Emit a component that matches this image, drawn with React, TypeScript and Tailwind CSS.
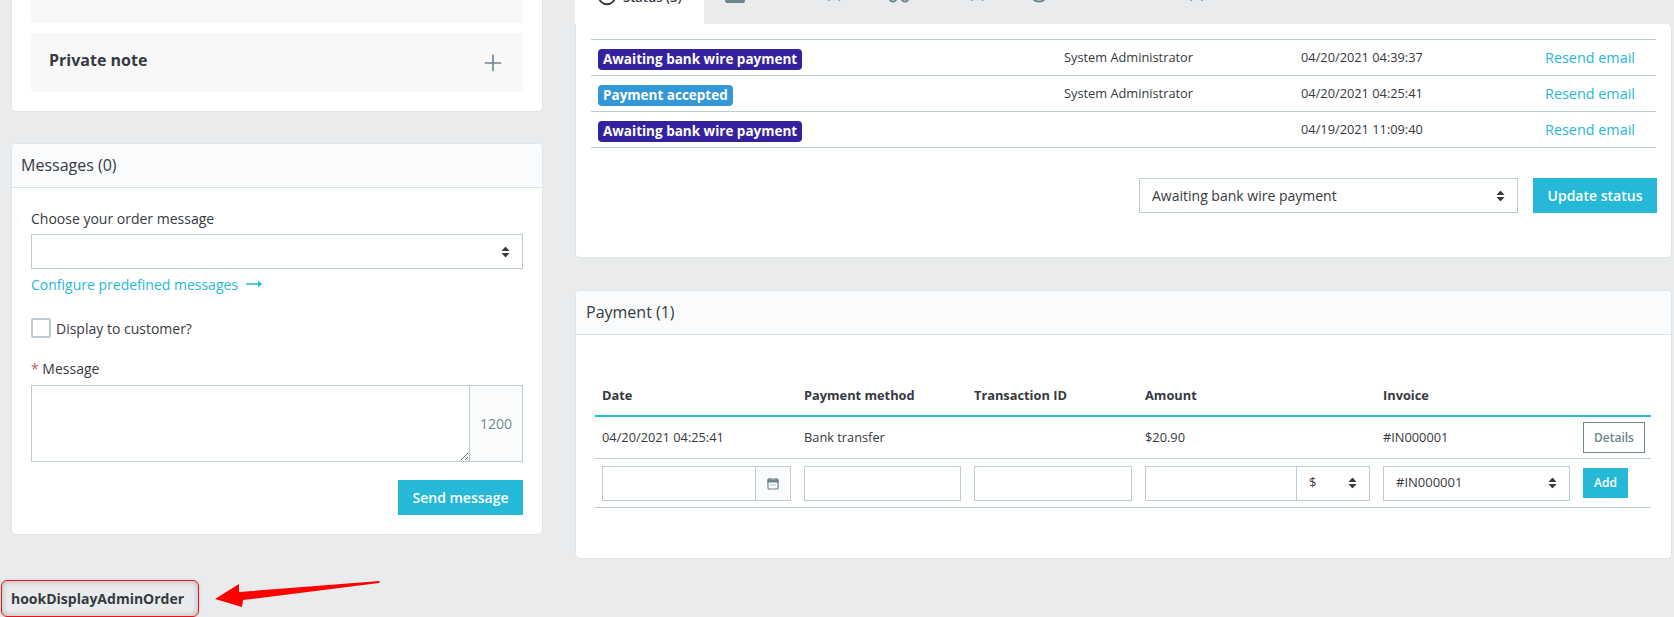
import { History, Plus } from "lucide-react";

const font = { fontFamily: '"Open Sans", sans-serif' };

// the small up/down triangles PrestaShop puts on its selects
function SortArrows({ className }: { className?: string }) {
  return (
    <svg width="9" height="11" viewBox="0 0 9 11" className={className} fill="#363a41">
      <polygon points="4.5,0 8.5,4.4 0.5,4.4" />
      <polygon points="4.5,11 8.5,6.6 0.5,6.6" />
    </svg>
  );
}

function Select({ value, className, small }: { value: string; className?: string; small?: boolean }) {
  return (
    <div className={`relative ${className ?? ""}`}>
      <select
        defaultValue={value}
        className={`w-full h-full appearance-none bg-white pl-[12px] pr-8 text-[#363a41] outline-none ${small ? "text-[13px]" : "text-[14px]"}`}
      >
        <option>{value}</option>
      </select>
      <SortArrows className="absolute right-[12px] top-1/2 -translate-y-1/2 pointer-events-none" />
    </div>
  );
}

function Card({ title, titleClass, children }: { title: string; titleClass: string; children: React.ReactNode }) {
  return (
    <div className="bg-white rounded-[5px] border border-[#dfe5e7] overflow-hidden">
      <div className={`h-[44px] flex items-center pb-[2px] bg-[#fafbfc] border-b border-[#dbe6e9] text-[16px] text-[#363a41] ${titleClass}`}>
        {title}
      </div>
      {children}
    </div>
  );
}

const statusRows = [
  { label: "Awaiting bank wire payment", color: "bg-[#34219e]", by: "System Administrator", date: "04/20/2021 04:39:37" },
  { label: "Payment accepted", color: "bg-[#3498d8]", by: "System Administrator", date: "04/20/2021 04:25:41" },
  { label: "Awaiting bank wire payment", color: "bg-[#34219e]", by: "", date: "04/19/2021 11:09:40" },
];

const payCols = "grid grid-cols-[202px_170px_171px_238px_200px_75px]";

function Tabs() {
  return (
    <div className="h-[54px] -mt-[30px] flex items-center text-[13px] font-semibold text-[#6c868e]">
      <div className="w-[129px] h-full bg-white flex items-center pl-[21px] gap-[5px] text-[#363a41]">
        <History size={22} strokeWidth={2} className="translate-y-[-1px]" />
        <span className="translate-y-[1px]">Status (3)</span>
      </div>
      <div className="w-[162px] h-full flex items-center pl-[21px] gap-[6px]">
        <svg width="20" height="20" viewBox="0 0 20 20" className="-translate-y-[4px]">
          <rect width="20" height="20" rx="2" fill="#6c868e" />
        </svg>
        <span className="-translate-y-[2px]">Documents (1)</span>
      </div>
      <div className="w-[143px] h-full flex items-center pl-[21px] gap-[5px]">
        <svg width="24" height="20" viewBox="0 0 24 20" fill="none" stroke="#6c868e" strokeWidth="2" className="-translate-y-[4px]">
          <path d="M1 15V5h14v10M15 9h4l4 4v2" />
          <circle cx="6" cy="15" r="3.5" fill="#eaebec" />
          <circle cx="18" cy="15" r="3.5" fill="#eaebec" />
        </svg>
        <span className="-translate-y-[2px]">Carriers (1)</span>
      </div>
      <div className="h-full flex items-center pl-[20px] gap-[5px]">
        <svg width="20" height="20" viewBox="0 0 20 20" fill="none" stroke="#6c868e" strokeWidth="2" className="-translate-y-[4px]">
          <circle cx="10" cy="10" r="8.5" />
        </svg>
        <span className="-translate-y-[2px]">Merchandise returns (0)</span>
      </div>
    </div>
  );
}

export default function App() {
  return (
    <div className="relative h-[617px] overflow-hidden bg-[#eaebec] flex text-[#363a41]" style={font}>
      {/* left column */}
      <div className="w-[532px] ml-[11px] shrink-0 -mt-[60px]">
        <div className="bg-white rounded-[5px] border border-[#dfe5e7] px-[19px] pb-[19px] flex flex-col gap-[10px]">
          <div className="h-[82px] bg-[#f8f8f8]" />
          <div className="h-[59px] bg-[#f8f8f8] flex justify-between pl-[18px] pr-[17px] pt-[15px]">
            <span className="text-[16px] font-bold leading-[24px]">Private note</span>
            <Plus size={26} strokeWidth={1.5} className="text-[#6c868e] mt-[2px]" />
          </div>
        </div>

        <div className="mt-[31px]">
          <Card title="Messages (0)" titleClass="px-[9px]">
            <div className="px-[19px] pt-[21px] pb-[19px] text-[14px]">
              <div className="leading-[20px] h-[25px]">Choose your order message</div>
              <Select value="" className="h-[35px] border border-[#bbcdd2]" />
              <div className="mt-[4px] h-[22px] flex items-center gap-[8px] text-[#25b9d7]">
                Configure predefined messages
                <svg width="16" height="8" viewBox="0 0 16 8" fill="#25b9d7">
                  <path d="M0 3.2h12V0.5L16 4l-4 3.5V4.8H0z" />
                </svg>
              </div>
              <div className="mt-[23px] flex items-center gap-[5px] h-[20px]">
                <span className="w-[20px] h-[20px] rounded-[2px] border-2 border-[#bbcdd2]" />
                <span>Display to customer?</span>
              </div>
              <div className="mt-[21px] h-[26px] leading-[20px]">
                <span className="text-[#c05c67]">*</span> Message
              </div>
              <div className="flex h-[77px] border border-[#bbcdd2]">
                <textarea className="flex-1 resize outline-none" defaultValue="" />
                <div className="w-[53px] flex items-center justify-center bg-[#fafbfc] border-l border-[#bbcdd2] text-[#6c868e]">
                  1200
                </div>
              </div>
              <div className="mt-[18px] flex justify-end">
                <button className="w-[125px] h-[35px] bg-[#25b9d7] text-white font-semibold text-[14px]">
                  Send message
                </button>
              </div>
            </div>
          </Card>
        </div>

        <div className="-ml-[10px] mt-[45px] w-[198px] h-[37px] flex items-center pl-[9px] rounded-[6px] border-[1.5px] border-[#e8141c] shadow-[inset_0_0_6px_rgba(0,0,0,0.25),0_0_3px_rgba(0,0,0,0.15)] text-[14px] font-bold">
          hookDisplayAdminOrder
        </div>
      </div>

      {/* right column */}
      <div className="w-[1097px] ml-[32px] shrink-0">
        <Tabs />
        <div className="bg-white rounded-b-[5px] rounded-tr-[5px] border-x border-b border-[#dfe5e7] h-[234px] pt-[15px] px-[15px]">
          <div className="border-t border-[#bbcdd2]">
            {statusRows.map((row, i) => (
              <div key={i} className="h-[36px] border-b border-[#bbcdd2] flex items-center">
                <div className="w-[473px] pl-[7px]">
                  <span className={`${row.color} inline-block rounded-[4px] px-[5px] h-[21px] leading-[21px] text-white font-bold text-[13.5px]`}>
                    {row.label}
                  </span>
                </div>
                <div className="w-[237px] text-[12.8px]">{row.by}</div>
                <div className="w-[244px] text-[12.8px]">{row.date}</div>
                <div className="text-[14.4px] font-medium text-[#25b9d7]">Resend email</div>
              </div>
            ))}
          </div>
          <div className="mt-[30px] flex justify-end gap-[15px] -mr-[1px]">
            <Select value="Awaiting bank wire payment" className="w-[379px] h-[35px] border border-[#bbcdd2]" />
            <button className="w-[124px] h-[35px] bg-[#25b9d7] text-white font-semibold text-[14px]">
              Update status
            </button>
          </div>
        </div>

        <div className="mt-[32px]">
          <Card title="Payment (1)" titleClass="px-[10px]">
            <div className="h-[223px] pl-[19px] pr-[20px] pt-[47px] text-[12.8px]">
              <div className={`${payCols} h-[35px] font-bold border-b-2 border-[#25b9d7] items-start pt-[4px]`}>
                {["Date", "Payment method", "Transaction ID", "Amount", "Invoice"].map((h) => (
                  <div key={h} className="pl-[7px] leading-[18px]">{h}</div>
                ))}
              </div>
              <div className={`${payCols} h-[42px] items-center border-b border-[#bbcdd2]`}>
                <div className="pl-[7px]">04/20/2021 04:25:41</div>
                <div className="pl-[7px]">Bank transfer</div>
                <div />
                <div className="pl-[7px]">$20.90</div>
                <div className="pl-[7px]">#IN000001</div>
                <div className="pl-[7px]">
                  <button className="w-[62px] h-[31px] border border-[#6c868e] text-[#6c868e] font-semibold text-[12px]">
                    Details
                  </button>
                </div>
              </div>
              <div className={`${payCols} h-[49px] items-center border-b border-[#bbcdd2]`}>
                <div className="pl-[7px]">
                  <div className="flex w-[189px] h-[35px] border border-[#bbcdd2]">
                    <input className="flex-1 min-w-0 outline-none" />
                    <div className="w-[35px] flex items-center justify-center bg-[#fafbfc] border-l border-[#bbcdd2]">
                      <svg width="12" height="13" viewBox="0 0 12 13" fill="none" stroke="#6c868e" strokeWidth="1.2">
                        <rect x="1" y="2" width="10" height="10" rx="1" />
                        <path d="M1 3h10v2H1z" fill="#6c868e" />
                        <path d="M3 1v2M9 1v2M3.5 8h1M5.5 8h1M7.5 8h1" />
                      </svg>
                    </div>
                  </div>
                </div>
                <div className="pl-[7px]">
                  <input className="w-[157px] h-[35px] border border-[#bbcdd2] outline-none" />
                </div>
                <div className="pl-[7px]">
                  <input className="w-[158px] h-[35px] border border-[#bbcdd2] outline-none" />
                </div>
                <div className="pl-[7px]">
                  <div className="flex w-[225px] h-[35px] border border-[#bbcdd2]">
                    <input className="w-[150px] outline-none" />
                    <Select value="$" small className="flex-1 border-l border-[#bbcdd2]" />
                  </div>
                </div>
                <div className="pl-[7px]">
                  <Select value="#IN000001" small className="w-[187px] h-[35px] border border-[#bbcdd2]" />
                </div>
                <div className="pl-[7px]">
                  <button className="w-[45px] h-[30px] bg-[#25b9d7] text-white font-semibold text-[12px]">Add</button>
                </div>
              </div>
            </div>
          </Card>
        </div>
      </div>

      {/* red arrow annotation */}
      <svg className="absolute left-[210px] top-[575px]" width="175" height="36" viewBox="0 0 175 36" fill="#fe0000">
        <polygon points="5,24 29,9 29,17 170,6 169,8 33,25 32,32" />
      </svg>
    </div>
  );
}
